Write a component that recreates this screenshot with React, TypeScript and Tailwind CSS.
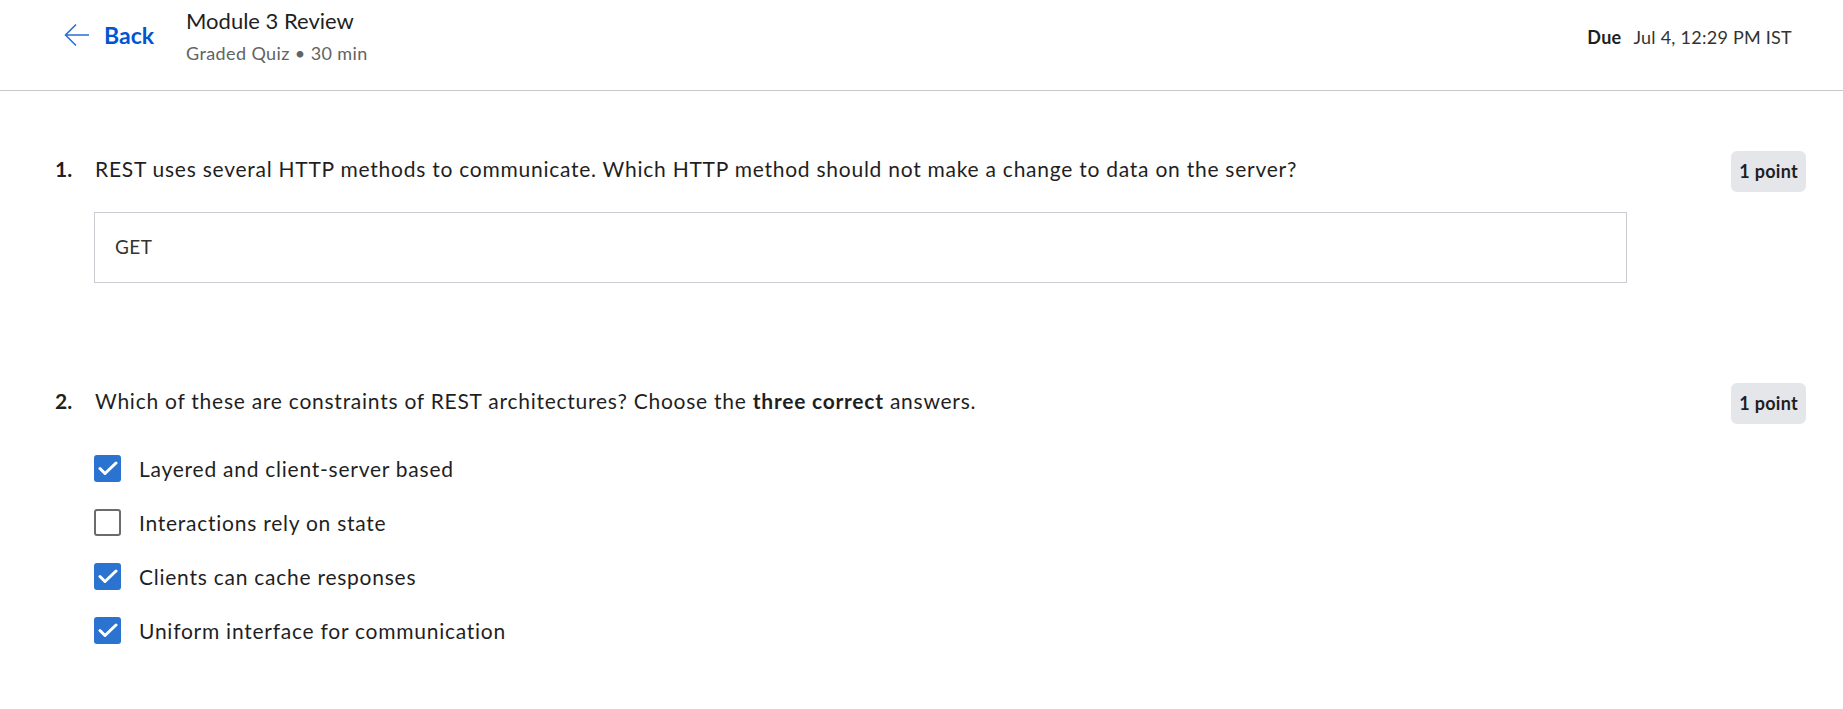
import { useState } from 'react';

const font = { fontFamily: 'Lato, "Noto Sans", sans-serif' };

function Checkbox({ checked, onChange }: { checked: boolean; onChange: () => void }) {
  return (
    <button
      type="button"
      onClick={onChange}
      className={`w-[27px] h-[27px] rounded-[3px] flex items-center justify-center shrink-0 ${
        checked ? 'bg-[#2a73d0]' : 'bg-white border-[2px] border-[#6b6b6b]'
      }`}
    >
      {checked && (
        <svg width="20" height="15" viewBox="0 0 20 15" fill="none">
          <path d="M2 7.5L7 12.5L18 2" stroke="white" strokeWidth="3" strokeLinecap="round" strokeLinejoin="round" />
        </svg>
      )}
    </button>
  );
}

function PointBadge() {
  return (
    <span className="translate-y-[3px] bg-[#e5e6ea] rounded-[6px] px-[8px] h-[41px] flex items-center text-[18px] tracking-[0.3px] font-bold">
      1 point
    </span>
  );
}

export default function App() {
  const [answers, setAnswers] = useState([true, false, true, true]);
  const options = [
    'Layered and client-server based',
    'Interactions rely on state',
    'Clients can cache responses',
    'Uniform interface for communication',
  ];

  return (
    <div className="min-h-screen bg-white text-[#1f1f1f]" style={font}>
      {/* Header */}
      <header className="h-[91px] border-b border-[#c8c8c8] flex items-start justify-between pl-[64px] pr-[51px]">
        <div className="flex items-start pt-[7px]">
          <button className="flex items-center gap-[14px] text-[#0056d2] mt-[15px]">
            <svg width="26" height="26" viewBox="0 0 26 26" fill="none">
              <path d="M25 13H2M12 2.5L1.5 13L12 23.5" stroke="#2a6fd6" strokeWidth="1.6" />
            </svg>
            <span className="text-[23px] font-bold leading-none">Back</span>
          </button>
          <div className="ml-[32px] flex flex-col">
            <span className="text-[22px] leading-[27px]">Module 3 Review</span>
            <span className="text-[18px] leading-[22px] tracking-[0.4px] text-[#636363] mt-[8px]">
              Graded Quiz • 30 min
            </span>
          </div>
        </div>
        <div className="pt-[24px] text-[18px] tracking-[0.25px]">
          <span className="font-bold">Due</span>
          <span className="ml-[12px] text-[#333]">Jul 4, 12:29 PM IST</span>
        </div>
      </header>

      <main className="pl-[55px] pr-[37px]">
        {/* Question 1 */}
        <section className="pt-[57px]">
          <div className="flex items-center">
            <span className="w-[40px] text-[21px] font-bold">1.</span>
            <p className="flex-1 text-[21px] tracking-[0.75px]">
              REST uses several HTTP methods to communicate. Which HTTP method should not make a change to data on the server?
            </p>
            <PointBadge />
          </div>
          <div className="ml-[39px] mt-[23px] w-[1533px] h-[71px] border border-[#cacdd2] flex items-center px-[20px] text-[19px] tracking-[0.4px] text-[#333]">
            GET
          </div>
        </section>

        {/* Question 2 */}
        <section className="pt-[97px]">
          <div className="flex items-center">
            <span className="w-[40px] text-[21px] font-bold">2.</span>
            <p className="flex-1 text-[21px] tracking-[0.75px]">
              Which of these are constraints of REST architectures? Choose the <span className="font-bold">three correct</span> answers.
            </p>
            <PointBadge />
          </div>
          <div className="ml-[39px] mt-[34px] flex flex-col gap-[27px]">
            {options.map((opt, i) => (
              <label key={i} className="flex items-center gap-[18px] cursor-pointer">
                <Checkbox
                  checked={answers[i]}
                  onChange={() => setAnswers(answers.map((a, j) => (j === i ? !a : a)))}
                />
                <span className="text-[21px] leading-[27px] tracking-[0.75px]">{opt}</span>
              </label>
            ))}
          </div>
        </section>
      </main>
    </div>
  );
}
